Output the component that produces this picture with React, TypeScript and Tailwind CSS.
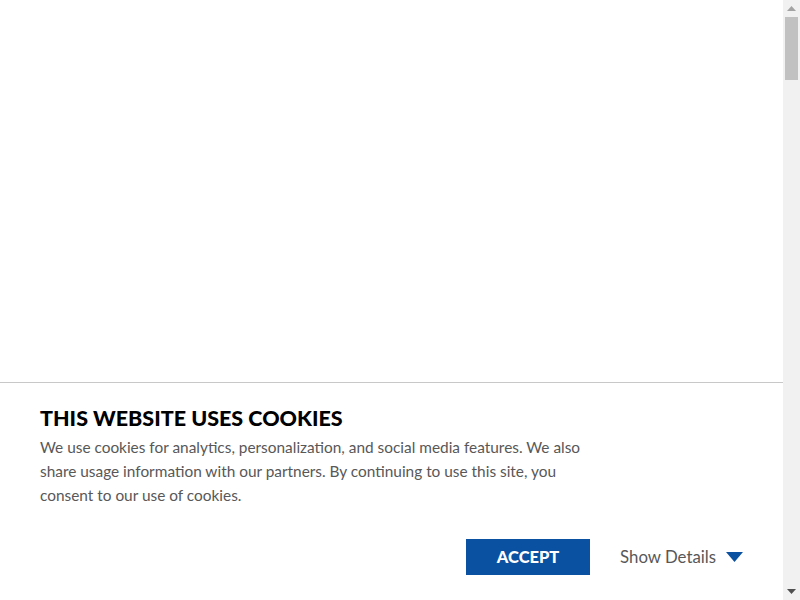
export default function App() {
  return (
    <div className="h-[5400px] bg-white">
      <div className="fixed bottom-0 left-0 right-[17px] h-[218px] border-t border-[#c8c8c8] bg-white px-10 font-['Lato',sans-serif]">
        <h2 className="pt-[21px] text-[21.5px] leading-[28px] font-black text-black">
          THIS WEBSITE USES COOKIES
        </h2>
        <p className="mt-[3px] max-w-[560px] text-[15.4px] leading-[24px] text-[#585858]">
          We use cookies for analytics, personalization, and social media features. We also
          share usage information with our partners. By continuing to use this site, you
          consent to our use of cookies.
        </p>
        <div className="mt-[32px] flex items-center justify-end">
          <button className="h-[36px] w-[124px] bg-[#0a51a1] text-[16.5px] font-black text-white">
            ACCEPT
          </button>
          <button className="ml-[30px] flex items-center text-[16.8px] text-[#585858]">
            Show Details
            <svg className="ml-[10px]" width="17" height="10" viewBox="0 0 17 10">
              <path d="M0 0 H17 L8.5 10 Z" fill="#0a51a1" />
            </svg>
          </button>
        </div>
      </div>
      {/* classic scrollbar */}
      <div className="fixed top-0 right-0 bottom-0 flex w-[17px] flex-col items-center bg-[#f1f1f1]">
        <div className="flex h-[17px] w-full items-center justify-center">
          <svg width="9" height="5" viewBox="0 0 9 5">
            <path d="M0 5 L4.5 0 L9 5 Z" fill="#a3a3a3" />
          </svg>
        </div>
        <div className="h-[63px] w-[13px] bg-[#c1c1c1]" />
        <div className="flex-1" />
        <div className="flex h-[17px] w-full items-center justify-center">
          <svg width="9" height="5" viewBox="0 0 9 5">
            <path d="M0 0 L9 0 L4.5 5 Z" fill="#505050" />
          </svg>
        </div>
      </div>
    </div>
  );
}
